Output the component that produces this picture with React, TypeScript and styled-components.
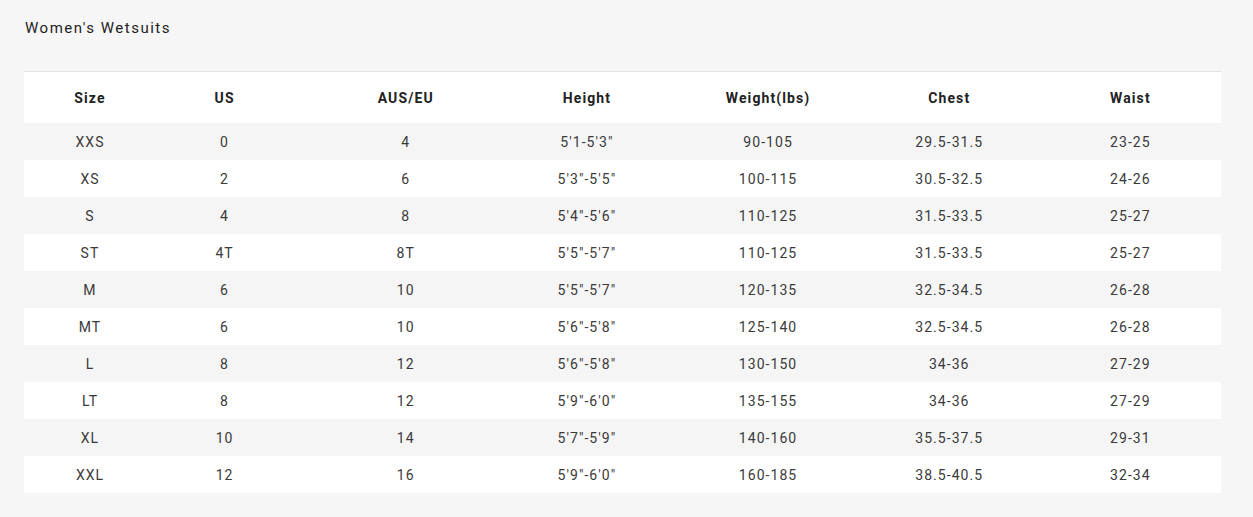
import { FC } from 'react';
import styled, { createGlobalStyle } from 'styled-components';

const GlobalStyle = createGlobalStyle`
  html, body {
    margin: 0;
    padding: 0;
    background: #f6f6f6;
    font-family: Roboto, "Liberation Sans", Arial, sans-serif;
  }
`

const columns = ['Size', 'US', 'AUS/EU', 'Height', 'Weight(lbs)', 'Chest', 'Waist']

const rows: string[][] = [
  ['XXS', '0', '4', '5\'1-5\'3"', '90-105', '29.5-31.5', '23-25'],
  ['XS', '2', '6', '5\'3"-5\'5"', '100-115', '30.5-32.5', '24-26'],
  ['S', '4', '8', '5\'4"-5\'6"', '110-125', '31.5-33.5', '25-27'],
  ['ST', '4T', '8T', '5\'5"-5\'7"', '110-125', '31.5-33.5', '25-27'],
  ['M', '6', '10', '5\'5"-5\'7"', '120-135', '32.5-34.5', '26-28'],
  ['MT', '6', '10', '5\'6"-5\'8"', '125-140', '32.5-34.5', '26-28'],
  ['L', '8', '12', '5\'6"-5\'8"', '130-150', '34-36', '27-29'],
  ['LT', '8', '12', '5\'9"-6\'0"', '135-155', '34-36', '27-29'],
  ['XL', '10', '14', '5\'7"-5\'9"', '140-160', '35.5-37.5', '29-31'],
  ['XXL', '12', '16', '5\'9"-6\'0"', '160-185', '38.5-40.5', '32-34'],
]

const App: FC = () => {
  return (
    <Page>
      <GlobalStyle />
      <Title>Women's Wetsuits</Title>
      <Table>
        <HeadRow>
          {columns.map((c) => (
            <HeadCell key={c}>{c}</HeadCell>
          ))}
        </HeadRow>
        {rows.map((r, i) => (
          <Row key={r[0]} striped={i % 2 === 0}>
            {r.map((v, j) => (
              <Cell key={j}>{v}</Cell>
            ))}
          </Row>
        ))}
      </Table>
    </Page>
  );
};

export default App;

const Page = styled('div')`
  padding: 18px 32px 24px 24px;
`

const Title = styled('h2')`
  margin: 0 0 33px 1px;
  font-size: 15px;
  line-height: 20px;
  font-weight: 400;
  letter-spacing: 1.5px;
  color: #1e1e1e;
`

const Table = styled('div')`
  width: 1197px;
  border-top: 1px solid #e4e4e4;
  background: #fff;
`

const HeadRow = styled('div')`
  display: grid;
  grid-template-columns: 110px repeat(6, 1fr);
  height: 51px;
  align-items: center;
  background: #fff;
`

const Row = styled('div')<{ striped?: boolean }>`
  display: grid;
  grid-template-columns: 110px repeat(6, 1fr);
  height: 37px;
  align-items: center;
  background: ${p => p.striped ? '#f5f5f5' : '#fff'};
`

const HeadCell = styled('div')`
  text-align: center;
  font-size: 14px;
  font-weight: 700;
  letter-spacing: 1.1px;
  color: #222;
  &:first-child {
    padding-left: 22px;
  }
`

const Cell = styled('div')`
  text-align: center;
  font-size: 14px;
  font-weight: 400;
  letter-spacing: 1.05px;
  color: #3a3a3a;
  &:first-child {
    padding-left: 22px;
  }
`
